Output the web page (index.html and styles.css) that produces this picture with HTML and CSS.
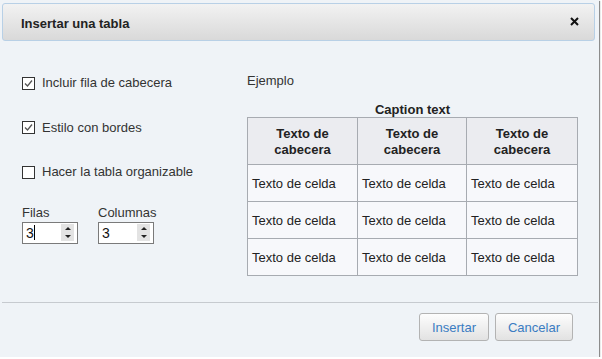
FILE: index.html
```html
<!DOCTYPE html>
<html lang="es">
<head>
<meta charset="utf-8">
<title>Insertar una tabla</title>
<link rel="stylesheet" href="styles.css">
</head>
<body>
<div class="dialog">
  <div class="header">
    <span class="title">Insertar una tabla</span>
    <span class="close"><svg width="9" height="9" viewBox="0 0 9 9"><path d="M1 1L8 8M8 1L1 8" stroke="#111" stroke-width="2" fill="none"/></svg></span>
  </div>
  <div class="main">
    <div class="options">
      <label class="opt"><span class="cb checked"><svg width="11" height="11" viewBox="0 0 11 11"><path d="M2 5.5L4.5 8L9 2.5" stroke="#555" stroke-width="1.3" fill="none"/></svg></span>Incluir fila de cabecera</label>
      <label class="opt"><span class="cb checked"><svg width="11" height="11" viewBox="0 0 11 11"><path d="M2 5.5L4.5 8L9 2.5" stroke="#555" stroke-width="1.3" fill="none"/></svg></span>Estilo con bordes</label>
      <label class="opt"><span class="cb"></span>Hacer la tabla organizable</label>
      <div class="spins">
        <div class="field">
          <div class="flabel">Filas</div>
          <div class="spin"><span class="val">3<span class="caret"></span></span><span class="arrows"><span class="up"></span><span class="down"></span></span></div>
        </div>
        <div class="field">
          <div class="flabel">Columnas</div>
          <div class="spin"><span class="val">3</span><span class="arrows"><span class="up"></span><span class="down"></span></span></div>
        </div>
      </div>
    </div>
    <div class="preview">
      <div class="example">Ejemplo</div>
      <table class="sample">
        <caption>Caption text</caption>
        <colgroup><col class="c1"><col class="c2"><col class="c3"></colgroup>
        <thead>
          <tr><th>Texto de<br>cabecera</th><th>Texto de<br>cabecera</th><th>Texto de<br>cabecera</th></tr>
        </thead>
        <tbody>
          <tr><td>Texto de celda</td><td>Texto de celda</td><td>Texto de celda</td></tr>
          <tr><td>Texto de celda</td><td>Texto de celda</td><td>Texto de celda</td></tr>
          <tr><td>Texto de celda</td><td>Texto de celda</td><td>Texto de celda</td></tr>
        </tbody>
      </table>
    </div>
  </div>
  <div class="sep"></div>
  <div class="footer">
    <button class="btn">Insertar</button>
    <button class="btn">Cancelar</button>
  </div>
</div>
</body>
</html>
```

FILE: styles.css
```css
html, body {
  margin: 0;
  padding: 0;
  background: #ffffff;
}
body {
  font-family: "Liberation Sans", Arial, sans-serif;
  font-size: 13px;
  line-height: 16px;
  color: #333;
}
.dialog {
  width: 599px;
  height: 357px;
  background: #eff3f7;
  box-shadow: 1px 1px 1px rgba(0, 0, 0, 0.45);
  display: flex;
  flex-direction: column;
  box-sizing: border-box;
  padding-top: 3px;
}
.header {
  margin: 0 4px 0 2px;
  height: 38px;
  box-sizing: border-box;
  border: 1px solid #b8d0e6;
  border-radius: 3px;
  background: linear-gradient(#f2f2f2, #d9d9d9);
  display: flex;
  align-items: center;
  justify-content: space-between;
  padding: 4px 15px 0 18px;
}
.title {
  font-weight: bold;
  color: #222;
}
.close {
  display: flex;
  margin-top: -6px;
}
.main {
  height: 261px;
  display: flex;
  align-items: flex-start;
  padding-left: 22px;
  padding-top: 31px;
  box-sizing: border-box;
}
.options {
  width: 225px;
  margin-top: 3px;
  display: flex;
  flex-direction: column;
}
.opt {
  display: flex;
  align-items: center;
  height: 16px;
  margin-bottom: 28.5px;
  color: #333;
}
.cb {
  width: 13px;
  height: 13px;
  box-sizing: border-box;
  border: 1px solid #333;
  background: #fff;
  margin-right: 7px;
  display: flex;
  align-items: center;
  justify-content: center;
}
.spins {
  display: flex;
  gap: 20px;
  margin-top: -4px;
}
.flabel {
  height: 16px;
  margin-bottom: 1px;
}
.spin {
  width: 56px;
  height: 22px;
  box-sizing: border-box;
  border: 1px solid #7a7a7a;
  background: #fff;
  display: flex;
  align-items: center;
  justify-content: space-between;
  padding: 0 3px 0 3px;
}
.val {
  font-size: 14px;
  color: #111;
  display: flex;
  align-items: center;
}
.caret {
  display: inline-block;
  width: 1px;
  height: 15px;
  background: #000;
  margin-left: 0;
}
.arrows {
  width: 13px;
  height: 17px;
  background: #e3e3e3;
  display: flex;
  flex-direction: column;
  justify-content: space-between;
  align-items: center;
  padding: 3px 0;
  box-sizing: border-box;
}
.up {
  width: 0;
  height: 0;
  border-left: 3px solid transparent;
  border-right: 3px solid transparent;
  border-bottom: 3px solid #222;
}
.down {
  width: 0;
  height: 0;
  border-left: 3px solid transparent;
  border-right: 3px solid transparent;
  border-top: 3px solid #222;
}
.preview {
  display: flex;
  flex-direction: column;
}
.example {
  height: 16px;
  margin-top: 1px;
  margin-bottom: 13px;
  color: #333;
}
.sample {
  border-collapse: collapse;
  table-layout: fixed;
  width: 331px;
}
.sample caption {
  font-weight: bold;
  color: #222;
  line-height: 14px;
  padding-top: 1px;
}
.c1 { width: 110px; }
.c2 { width: 109px; }
.c3 { width: 111px; }
.sample th,
.sample td {
  border: 1px solid #a7abb1;
}
.sample th {
  background: #ebecf0;
  font-weight: bold;
  color: #222;
  padding: 8px 4px 6px;
  text-align: center;
}
.sample td {
  background: #f7f8fb;
  padding: 11px 4px 9px;
  color: #222;
  white-space: nowrap;
}
.sep {
  height: 1px;
  background: #c6cacf;
  margin: 0 1px 0 2px;
}
.footer {
  display: flex;
  justify-content: flex-end;
  gap: 6px;
  padding: 10px 26px 0 0;
}
.btn {
  height: 28px;
  padding: 0 12px;
  font-family: "Liberation Sans", Arial, sans-serif;
  font-size: 13px;
  color: #3a7cc2;
  border: 1px solid #b3b3b3;
  border-radius: 3px;
  background: linear-gradient(#fdfdfd, #e2e2e2);
}
```
